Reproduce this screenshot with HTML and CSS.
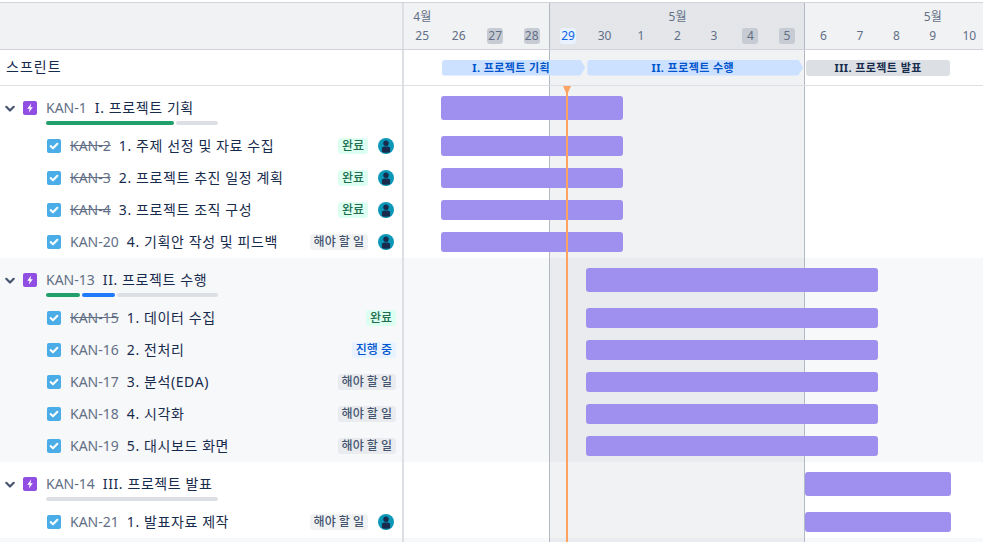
FILE: index.html
```html
<!DOCTYPE html>
<html lang="ko">
<head>
    <meta charset="UTF-8">
    <meta name="viewport" content="width=device-width, initial-scale=1.0">
    <title>타임라인</title>
    <link rel="stylesheet" href="styles.css">
</head>
<body>
<svg class="defs" width="0" height="0" aria-hidden="true">
    <symbol id="chev" viewBox="0 0 10 8"><path d="M1.3 1.8 5 5.500l3.700-3.700" fill="none" stroke="currentColor" stroke-width="2.200" stroke-linecap="round" stroke-linejoin="round"/></symbol>
    <symbol id="epic" viewBox="0 0 14 14"><rect width="14" height="14" rx="2" fill="#904ee2"/><path d="M8.200 2.500 4.200 7.800h2.400l-.8 3.700 4-5.300H7.400z" fill="#fff"/></symbol>
    <symbol id="task" viewBox="0 0 14 14"><rect width="14" height="14" rx="2" fill="#4bade8"/><path d="M3.600 7.100 6 9.300l4.400-4.600" fill="none" stroke="#fff" stroke-width="2" stroke-linecap="round" stroke-linejoin="round"/></symbol>
    <symbol id="user" viewBox="0 0 16 16"><circle cx="8" cy="8" r="8" fill="#0a97b8"/><circle cx="8" cy="5.200" r="2.700" fill="#172b4d"/><path d="M3.900 13.900v-3.100C3.900 9.200 5 8.400 6.400 8.400h3.200c1.400 0 2.500.8 2.500 2.400v3.100C10.800 14.900 5.200 14.900 3.900 13.900z" fill="#172b4d"/></symbol>
</svg>

<div class="gantt">
    <div class="row head">
        <div class="side"></div>
        <div class="track days">
            <span class="month m1">4월</span>
            <span class="month m2">5월</span>
            <span class="month m3">5월</span>
            <span class="day">25</span><span class="day">26</span><span class="day off">27</span><span class="day off">28</span>
            <span class="day today">29</span><span class="day">30</span><span class="day">1</span><span class="day">2</span>
            <span class="day">3</span><span class="day off">4</span><span class="day off">5</span><span class="day">6</span>
            <span class="day">7</span><span class="day">8</span><span class="day">9</span><span class="day">10</span>
        </div>
    </div>

    <div class="row sprints">
        <div class="side sprint-title">스프린트</div>
        <div class="track">
            <div class="sprint s1">I. 프로젝트 기획</div>
            <div class="sprint s2">II. 프로젝트 수행</div>
            <div class="sprint s3">III. 프로젝트 발표</div>
        </div>
    </div>

    <div class="rows">
        <span class="now"></span>

        <div class="row epic">
            <div class="side">
                <svg class="chev"><use href="#chev"/></svg>
                <svg class="ico"><use href="#epic"/></svg>
                <div class="epic-text">
                    <div class="name"><span class="key">KAN-1</span><span class="title">I. 프로젝트 기획</span></div>
                    <div class="progress"><i class="green w1"></i><i class="rest"></i></div>
                </div>
            </div>
            <div class="track"><div class="bar b1"></div></div>
        </div>
        <div class="row">
            <div class="side child">
                <svg class="ico"><use href="#task"/></svg>
                <span class="key struck">KAN-2</span><span class="title">1. 주제 선정 및 자료 수집</span>
                <span class="lozenge done">완료</span><svg class="avatar"><use href="#user"/></svg>
            </div>
            <div class="track"><div class="bar b1"></div></div>
        </div>
        <div class="row">
            <div class="side child">
                <svg class="ico"><use href="#task"/></svg>
                <span class="key struck">KAN-3</span><span class="title">2. 프로젝트 추진 일정 계획</span>
                <span class="lozenge done">완료</span><svg class="avatar"><use href="#user"/></svg>
            </div>
            <div class="track"><div class="bar b1"></div></div>
        </div>
        <div class="row">
            <div class="side child">
                <svg class="ico"><use href="#task"/></svg>
                <span class="key struck">KAN-4</span><span class="title">3. 프로젝트 조직 구성</span>
                <span class="lozenge done">완료</span><svg class="avatar"><use href="#user"/></svg>
            </div>
            <div class="track"><div class="bar b1"></div></div>
        </div>
        <div class="row">
            <div class="side child">
                <svg class="ico"><use href="#task"/></svg>
                <span class="key">KAN-20</span><span class="title">4. 기획안 작성 및 피드백</span>
                <span class="lozenge todo">해야 할 일</span><svg class="avatar"><use href="#user"/></svg>
            </div>
            <div class="track"><div class="bar b1"></div></div>
        </div>

        <div class="group">
            <div class="row epic">
                <div class="side">
                    <svg class="chev"><use href="#chev"/></svg>
                    <svg class="ico"><use href="#epic"/></svg>
                    <div class="epic-text">
                        <div class="name"><span class="key">KAN-13</span><span class="title">II. 프로젝트 수행</span></div>
                        <div class="progress"><i class="green w2"></i><i class="blue w3"></i><i class="rest"></i></div>
                    </div>
                </div>
                <div class="track"><div class="bar b2"></div></div>
            </div>
            <div class="row">
                <div class="side child wide">
                    <svg class="ico"><use href="#task"/></svg>
                    <span class="key struck">KAN-15</span><span class="title">1. 데이터 수집</span>
                    <span class="lozenge done">완료</span>
                </div>
                <div class="track"><div class="bar b2"></div></div>
            </div>
            <div class="row">
                <div class="side child wide">
                    <svg class="ico"><use href="#task"/></svg>
                    <span class="key">KAN-16</span><span class="title">2. 전처리</span>
                    <span class="lozenge doing">진행 중</span>
                </div>
                <div class="track"><div class="bar b2"></div></div>
            </div>
            <div class="row">
                <div class="side child wide">
                    <svg class="ico"><use href="#task"/></svg>
                    <span class="key">KAN-17</span><span class="title">3. 분석(EDA)</span>
                    <span class="lozenge todo">해야 할 일</span>
                </div>
                <div class="track"><div class="bar b2"></div></div>
            </div>
            <div class="row">
                <div class="side child wide">
                    <svg class="ico"><use href="#task"/></svg>
                    <span class="key">KAN-18</span><span class="title">4. 시각화</span>
                    <span class="lozenge todo">해야 할 일</span>
                </div>
                <div class="track"><div class="bar b2"></div></div>
            </div>
            <div class="row">
                <div class="side child wide">
                    <svg class="ico"><use href="#task"/></svg>
                    <span class="key">KAN-19</span><span class="title">5. 대시보드 화면</span>
                    <span class="lozenge todo">해야 할 일</span>
                </div>
                <div class="track"><div class="bar b2"></div></div>
            </div>
        </div>

        <div class="row epic">
            <div class="side">
                <svg class="chev"><use href="#chev"/></svg>
                <svg class="ico"><use href="#epic"/></svg>
                <div class="epic-text">
                    <div class="name"><span class="key">KAN-14</span><span class="title">III. 프로젝트 발표</span></div>
                    <div class="progress"><i class="rest"></i></div>
                </div>
            </div>
            <div class="track"><div class="bar b3"></div></div>
        </div>
        <div class="row">
            <div class="side child">
                <svg class="ico"><use href="#task"/></svg>
                <span class="key">KAN-21</span><span class="title">1. 발표자료 제작</span>
                <span class="lozenge todo">해야 할 일</span><svg class="avatar"><use href="#user"/></svg>
            </div>
            <div class="track"><div class="bar b3"></div></div>
        </div>
        <div class="group">
            <div class="row">
                <div class="side"></div>
                <div class="track"></div>
            </div>
        </div>
    </div>
</div>
</body>
</html>
```

FILE: styles.css
```css
html, body { margin: 0; height: 100%; overflow: hidden; background: #fff; }
body { font-family: "Noto Sans", "Noto Sans CJK KR", sans-serif; font-size: 14px; color: #172b4d; }
.defs { display: block; height: 0; }

.gantt { height: 542px; padding-top: 2px; box-sizing: border-box; overflow: hidden; }
.row { display: flex; height: 32px; }
.side { width: 404px; box-sizing: border-box; flex: none; border-right: 2px solid #dcdfe4; display: flex; align-items: center; }
.track {
    flex: 1;
    display: grid;
    grid-template-columns: repeat(16, 36.47px);
    grid-template-rows: 1fr;
    align-items: center;
    background: linear-gradient(90deg, transparent 145px, #b3b9c4 145px, #b3b9c4 146px, rgba(9, 30, 66, .06) 146px, rgba(9, 30, 66, .06) 400px, #b3b9c4 400px, #b3b9c4 401px, transparent 401px);
}

/* header */
.head { height: 48px; background: #f1f2f4; border-top: 1px solid #d0d3da; border-bottom: 1px solid #d0d3da; box-sizing: border-box; }
.days { grid-template-rows: 25px 16px; justify-items: center; align-items: center; align-content: start; }
.month { grid-row: 1; color: #626f86; font-size: 12px; align-self: end; padding-bottom: 3px; }
.m1 { grid-column: 1; }
.m2 { grid-column: 8; }
.m3 { grid-column: 15; }
.day { grid-row: 2; min-width: 16px; height: 16px; line-height: 16px; text-align: center; border-radius: 3px; font-size: 12px; color: #626f86; }
.off { background: #c7cbd3; }
.today { background: #e9f2ff; color: #0c66e4; }

/* sprint row */
.sprints { height: 36px; border-bottom: 1px solid #dcdfe4; box-sizing: border-box; }
.sprint-title { padding: 0 0 3px 6px; letter-spacing: 1px; }
.sprint { height: 16px; line-height: 16px; border-radius: 3px; font-size: 11px; font-weight: 700; letter-spacing: .4px; text-align: center; white-space: nowrap; color: #0055cc; background: #cce0ff; }
.s1 { grid-column: 2 / 6; margin: 0 1px 0 1.500px; padding-right: 5px; clip-path: polygon(0 0, calc(100% - 5px) 0, 100% 50%, calc(100% - 5px) 100%, 0 100%); }
.s2 { grid-column: 6 / 12; margin: 0 2px 0 1px; padding-right: 5px; clip-path: polygon(0 0, calc(100% - 5px) 0, 100% 50%, calc(100% - 5px) 100%, 0 100%); }
.s3 { grid-column: 12 / 16; margin: 0 1px 0 1px; background: #dcdfe4; color: #172b4d; }

/* task rows */
.rows { position: relative; }
.now { position: absolute; left: 566px; top: 0; width: 2px; height: 470px; background: #fea362; z-index: 1; }
.now:before { content: ""; position: absolute; left: -3px; top: 0; border-left: 4px solid transparent; border-right: 4px solid transparent; border-top: 9px solid #fea362; }
.group { background: #f7f8f9; }
.epic { height: 44px; }
.epic .side { align-items: flex-start; padding-left: 5px; padding-top: 14px; }
.chev { width: 10px; height: 8px; color: #44546f; margin: 5px 8px 0 0; flex: none; }
.ico { width: 14px; height: 14px; flex: none; }
.epic .ico { margin-top: 1px; }
.epic-text { margin-left: 9px; width: 172px; }
.name { white-space: nowrap; line-height: 16px; }
.key { color: #626f86; margin-right: 8px; }
.struck { text-decoration: line-through; }
.title { letter-spacing: .6px; white-space: nowrap; }
.progress { display: flex; gap: 2px; margin-top: 5px; height: 4px; }
.progress i { display: block; height: 4px; border-radius: 2px; }
.green { background: #22a06b; }
.blue { background: #1d7afc; }
.rest { flex: 1; background: #dcdfe4; }
.w1 { width: 128px; }
.w2 { width: 34px; }
.w3 { width: 33px; }

.child { padding-left: 47px; padding-right: 8px; }
.wide { padding-right: 6px; }
.child .ico { margin-right: 9px; }
.child .key, .child .title { margin-bottom: 2px; }
.child .title { flex: 1; }
.lozenge { height: 16px; line-height: 16px; padding: 0 4px; border-radius: 3px; font-size: 12px; font-weight: 500; white-space: nowrap; }
.done { background: #dcfff1; color: #216e4e; }
.doing { background: #e9f2ff; color: #0055cc; }
.todo { background: rgba(9, 30, 66, .06); color: #44546f; }
.avatar { width: 16px; height: 16px; margin-left: 10px; flex: none; }

.bar { height: 20px; border-radius: 3px; background: #9f8fef; }
.epic .bar { height: 24px; }
.b1 { grid-column: 2 / 7; margin-left: 1px; }
.b2 { grid-column: 6 / 14; }
.b3 { grid-column: 12 / 16; }
```
